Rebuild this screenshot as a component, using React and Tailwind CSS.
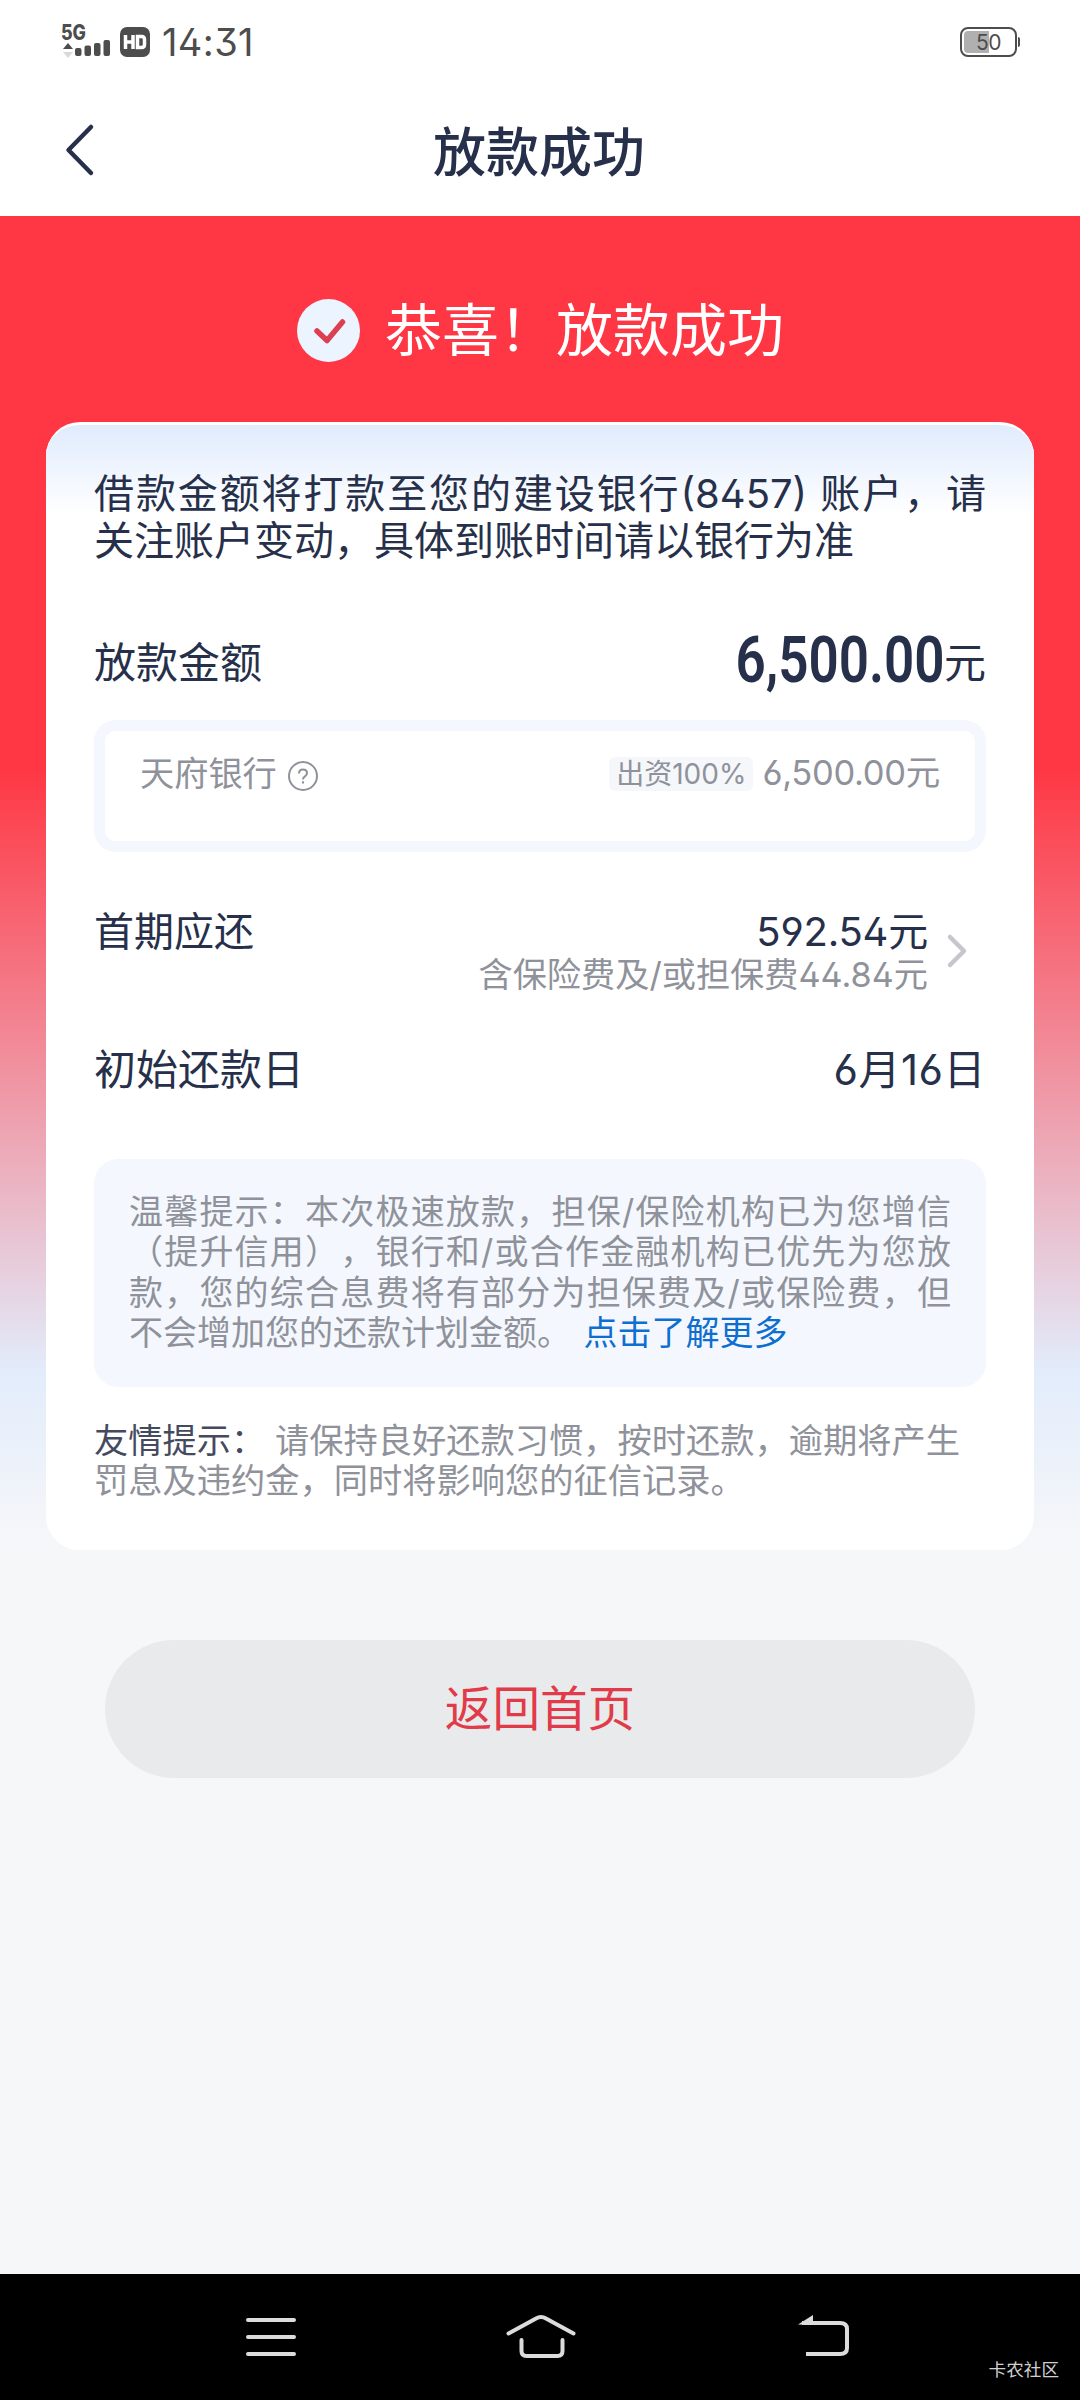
import React from 'react';

const amountLines = [
    '借款金额将打款至您的建设银行(8457) 账户，请',
    '关注账户变动，具体到账时间请以银行为准',
];

const tipLines = [
    '温馨提示：本次极速放款，担保/保险机构已为您增信',
    '（提升信用），银行和/或合作金融机构已优先为您放',
    '款，您的综合息费将有部分为担保费及/或保险费，但',
];

const StatusBar = () => (
    <div className="h-[84px] px-[60px] flex items-center justify-between text-[#4d4d4d]">
        <div className="flex items-center">
            <svg width="50" height="42" viewBox="0 -4 50 42" className="shrink-0">
                <text x="1" y="15" fontSize="21" fontWeight="800" fill="#4d4d4d" fontFamily="Inter" textLength="25" lengthAdjust="spacingAndGlyphs">5G</text>
                <path d="M3 24l5-6 5 6z" fill="#4d4d4d" />
                <path d="M3 27l5 6 5-6z" fill="#d9d9d9" />
                <rect x="15" y="23" width="6.500" height="8" rx="2" fill="#4d4d4d" />
                <rect x="24.500" y="20.500" width="6.500" height="10.500" rx="2" fill="#4d4d4d" />
                <rect x="34" y="18" width="6.500" height="13" rx="2" fill="#4d4d4d" />
                <rect x="43.500" y="15" width="6.500" height="16" rx="2" fill="#4d4d4d" />
            </svg>
            <span className="ml-[10px] w-[30px] h-[30px] rounded-[7px] bg-[#4d4d4d] text-white flex items-center justify-center">
                <svg width="24" height="16" viewBox="0 0 24 16" fill="none" stroke="#fff" strokeWidth="3.500">
                    <path d="M2.500 1v14M10 1v14M2.500 8H10M14.500 2.500h4q3 0 3 3v5q0 3-3 3h-4z" />
                </svg>
            </span>
            <span className="ml-[12px] text-[38px] leading-none tracking-[0.4px]">14:31</span>
        </div>
        <div className="flex items-center">
            <div className="relative w-[57px] h-[30px] rounded-[8px] border-2 border-[#4d4d4d] p-[2px]">
                <div className="w-[25px] h-[22px] rounded-l-[4px] bg-[#b0b0b0]" />
                <span className="absolute inset-0 flex items-center justify-center text-[21px] leading-none tracking-[-0.5px]">50</span>
            </div>
            <div className="w-[2px] h-[10px] ml-px rounded-r bg-[#4d4d4d]" />
        </div>
    </div>
);

const Header = () => (
    <div className="relative h-[132px] flex items-center justify-center pt-[6px] pr-[2px]">
        <svg className="absolute left-[62px] top-[37px]" width="36" height="58" viewBox="0 0 36 58" fill="none" stroke="#27304a" strokeWidth="4.500" strokeLinecap="round" strokeLinejoin="round">
            <path d="M29 6L6.500 29 29 52" />
        </svg>
        <h1 className="text-[53px] leading-[60px] font-medium text-[#27304a]">放款成功</h1>
    </div>
);

const NavBar = () => (
    <div className="relative h-[126px] bg-black text-[#dcdcdc]">
        <div className="flex h-full pl-[246px] pt-[38px]">
            <svg width="50" height="46" viewBox="0 0 50 46" stroke="currentColor" strokeWidth="4" strokeLinecap="round">
                <path d="M2 8h46M2 25h46M2 42h46" />
            </svg>
            <svg className="ml-[210px]" width="70" height="46" viewBox="0 0 70 46" fill="none" stroke="currentColor" strokeWidth="4" strokeLinecap="round">
                <path d="M2.500 21.500L30 6.500q5-3 10 0l27.500 15" />
                <path d="M15.500 28v11q0 5 5 5h31q5 0 5-5V28" />
            </svg>
            <svg className="ml-[222px]" width="52" height="46" viewBox="0 0 52 46" fill="none" stroke="currentColor" strokeWidth="4">
                <path d="M4 11h38q7 0 7 6v19q0 6-7 6H8" />
                <path d="M0 12.500L15 3v10z" fill="currentColor" stroke="none" />
            </svg>
        </div>
        <span className="absolute right-[21px] bottom-[18px] text-[17.600px] leading-[24px] text-[#d0d0d0]">卡农社区</span>
    </div>
);

const App = () => {
    return (
        <div className="w-[1080px] h-[2400px] flex flex-col bg-white overflow-hidden text-[#27304a] [font-family:Inter,'Noto_Sans_CJK_SC',sans-serif] [font-feature-settings:'ss01'] [text-spacing-trim:space-all]">
            <StatusBar />
            <Header />
            <main className="flex-1 bg-[linear-gradient(to_bottom,#ff3744_0px,#ff3744_553px,#e2ecfb_1155px,#f6f7f9_1330px)]">
                <div className="h-[206px] pl-[297px] pt-[22px] flex items-center">
                    <svg width="63" height="63" viewBox="0 0 63 63" fill="none">
                        <circle cx="31.500" cy="31.500" r="31.500" fill="#ebf4ff" />
                        <path d="M20 32l10 9.500L45.500 23" stroke="#dc3f50" strokeWidth="5.500" strokeLinecap="round" strokeLinejoin="round" />
                    </svg>
                    <p className="ml-[25px] pt-[2px] text-[57px] leading-[64px] text-white">恭喜！放款成功</p>
                </div>

                {/* Result card */}
                <div className="mx-[46px] h-[1128px] px-[48px] pt-[45px] rounded-[34px] border-t-[3px] border-white bg-white bg-[linear-gradient(to_bottom,#e0ebfd_0px,#ffffff_90px)]">
                    <div className="text-[40px] leading-[47px]">
                        <p className="[text-align-last:justify] whitespace-nowrap">
                            {amountLines[0]}
                        </p>
                        <p className="whitespace-nowrap">{amountLines[1]}</p>
                    </div>

                    <div className="mt-[59px] h-[80px] flex items-center justify-between">
                        <span className="text-[42px] leading-[48px]">放款金额</span>
                        <span className="flex items-center">
                            <span className="inline-block mb-[7px] origin-right scale-x-[0.815] font-semibold text-[65px] leading-[64px] [font-family:Roboto]">6,500.00</span>
                            <span className="-ml-px text-[42px] leading-[48px]">元</span>
                        </span>
                    </div>

                    {/* Funding bank */}
                    <div className="mt-[17px] h-[132px] rounded-[22px] border-[11px] border-[#f4f7fd] bg-white px-[35px] pt-[24px] flex items-start justify-between text-[#8f929a]">
                        <span className="flex items-center text-[34.200px] leading-[36px]">
                            天府银行
                            <svg className="ml-[10px] mt-[5px]" width="32" height="32" viewBox="0 0 32 32" fill="none" stroke="currentColor" strokeWidth="2">
                                <circle cx="16" cy="16" r="14" />
                                <path d="M12 13.500q0-4 4-4t4 3.500q0 2-2 3.300-2 1.300-2 3.200" />
                                <path d="M16 21.300v2.300" />
                            </svg>
                        </span>
                        <span className="flex items-center">
                            <span className="mt-[2px] h-[34px] px-[7px] rounded-[6px] bg-[#f5f7fb] flex items-center text-[28px] leading-none">出资100%</span>
                            <span className="ml-[9px] text-[34.500px] leading-[36px] tracking-[-0.300px]">6,500.00元</span>
                        </span>
                    </div>

                    {/* First installment */}
                    <div className="mt-[56px] h-[86px] flex justify-between">
                        <span className="text-[40px] leading-[48px]">首期应还</span>
                        <div className="flex items-center">
                            <div className="text-right">
                                <p className="pt-px text-[40px] leading-[46px] tracking-[-0.200px]">592.54元</p>
                                <p className="text-[34.200px] leading-[40px] text-[#8f929a]">含保险费及/或担保费44.84元</p>
                            </div>
                            <svg className="ml-[18px] mr-[18px]" width="22" height="36" viewBox="0 0 22 36" fill="none" stroke="#c6c7cd" strokeWidth="4.500" strokeLinecap="round" strokeLinejoin="round">
                                <path d="M4 4l14 14L4 32" />
                            </svg>
                        </div>
                    </div>

                    <div className="mt-[52px] flex justify-between text-[42px] leading-[48px]">
                        <span>初始还款日</span>
                        <span className="tracking-[0.500px]">6月16日</span>
                    </div>

                    <div className="mt-[65px] h-[228px] rounded-[24px] bg-[#f4f8fe] px-[35px] pt-[33px] text-[34px] leading-[40.300px] text-[#8f929a] whitespace-nowrap">
                        {tipLines.map((line) => (
                            <p key={line} className="[text-align-last:justify]">{line}</p>
                        ))}
                        <p>
                            不会增加您的还款计划金额。 <a className="ml-[3px] text-[#0f6fd0]">点击了解更多</a>
                        </p>
                    </div>

                    <div className="mt-[34px] text-[34.250px] leading-[40px] text-[#8f929a] whitespace-nowrap">
                        <p><span className="text-[#454b5e]">友情提示：</span> 请保持良好还款习惯，按时还款，逾期将产生</p>
                        <p>罚息及违约金，同时将影响您的征信记录。</p>
                    </div>
                </div>

                <button className="mx-[105px] mt-[90px] w-[870px] h-[138px] rounded-full bg-[#e9eaec] text-[47.600px] text-[#e13a49]">
                    返回首页
                </button>
            </main>
            <NavBar />
        </div>
    );
};

export default App;
